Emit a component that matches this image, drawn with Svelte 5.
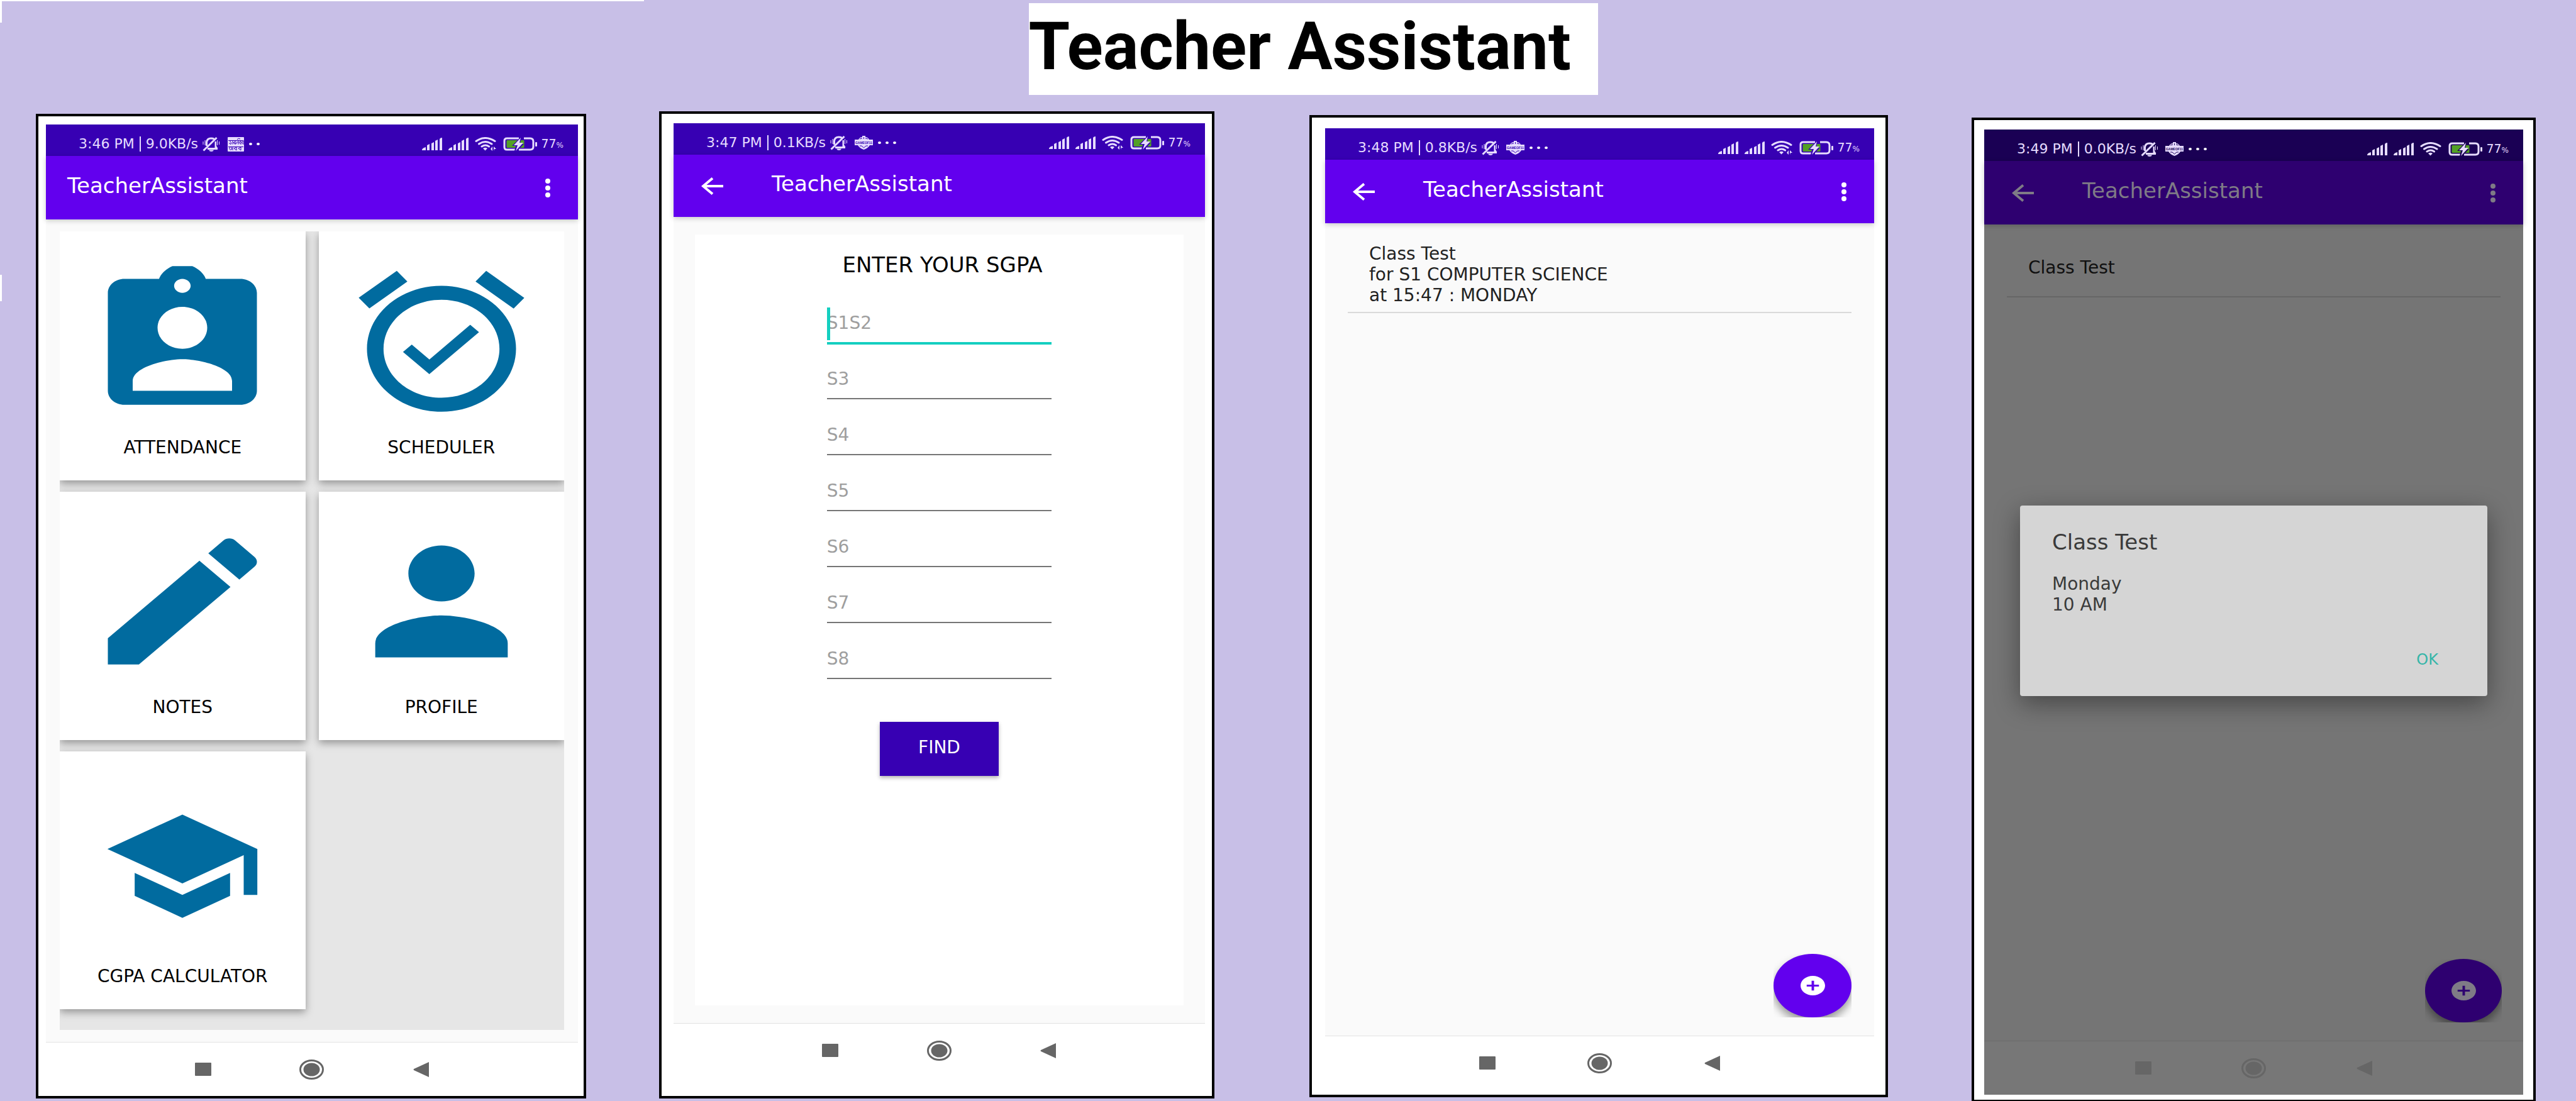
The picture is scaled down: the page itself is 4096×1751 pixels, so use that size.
<script>
  const tiles = [
    { label: 'ATTENDANCE', icon: 'M19 3h-4.18C14.6 2.300 14 1.600 13.200 1.200h-2.400C10 1.600 9.400 2.300 9.180 3H5c-1.1 0-2 .9-2 2v14c0 1.1.9 2 2 2h14c1.1 0 2-.9 2-2V5c0-1.1-.9-2-2-2zm-7 0c.55 0 1 .45 1 1s-.45 1-1 1-1-.45-1-1 .45-1 1-1zm0 4c1.66 0 3 1.34 3 3s-1.34 3-3 3-3-1.34-3-3 1.34-3 3-3zm6 12H6v-1.4c0-2 4-3.1 6-3.1s6 1.1 6 3.1V19z' },
    { label: 'SCHEDULER', icon: 'M22 5.72l-4.6-3.86-1.29 1.53 4.6 3.86L22 5.72zM7.88 3.39L6.6 1.86 2 5.71l1.29 1.53 4.59-3.85zM12 4c-4.97 0-9 4.03-9 9s4.02 9 9 9c4.97 0 9-4.03 9-9s-4.03-9-9-9zm0 16c-3.87 0-7-3.13-7-7s3.13-7 7-7 7 3.13 7 7-3.13 7-7 7zm-1.46-5.47L8.41 12.4l-1.06 1.06 3.18 3.18 6-6-1.06-1.06-4.93 4.95z' },
    { label: 'NOTES', icon: 'M3 17.25V21h3.75L17.81 9.94l-3.75-3.75L3 17.25zM20.71 7.04c.39-.39.39-1.02 0-1.41l-2.34-2.34c-.39-.39-1.02-.39-1.41 0l-1.83 1.83 3.75 3.75 1.83-1.83z' },
    { label: 'PROFILE', icon: 'M12 12c2.21 0 4-1.79 4-4s-1.79-4-4-4-4 1.79-4 4 1.79 4 4 4zm0 2c-2.67 0-8 1.34-8 4v2h16v-2c0-2.66-5.33-4-8-4z' },
    { label: 'CGPA CALCULATOR', small: true, icon: 'M5 13.18v4L12 21l7-3.82v-4L12 17l-7-3.82zM12 3L1 9l11 6 9-4.91V17h2V9L12 3z' }
  ];
  const semesters = ['S1S2', 'S3', 'S4', 'S5', 'S6', 'S7', 'S8'];
</script>

{#snippet signal()}
  <svg class="signal" viewBox="0 0 32 20">
    <path d="M0 20v-1q1-3 6-4v5zM8 20v-8l4-2v10zM15 20V9l4-2v13zM21 20V5l4-2v17zM28 20V2q1-2 4-2v20z" />
  </svg>
{/snippet}

{#snippet statusBar(time, speed, news, arrows)}
  <div class="status">
    <span class="clock">{time}</span><i class="bar"></i><span>{speed}</span>
    <svg class="bell" viewBox="0 0 27 23">
      <path d="M1.500 21.500L22.500 1M6.500 14V8q1-6 7-6 3 0 5 1M8 18.500h16" class="line" />
      <path d="M1 7v5M4 5v8M23.500 5v8M26.500 7v5" class="thin" />
      <path d="M19.500 7h2.500v7l2.500 4h-5zM10 20.500h8q-1 2.500-4 2.500t-4-2.500z" />
    </svg>
    {#if news}
      <svg class="news" viewBox="0 0 26 23">
        <rect width="26" height="23" rx="1" />
        <path d="M1 5.500h24M4 5.500v2q3 1 1 4l-3-2M8 5.500v6M12 5.500v6M12 7l-3 2 3 2q4-1 3-4M17 5.500v6M15 4q2-3 5-1M21 5.500v6l-3-3 3-2M25 5.500v6l-3-3 3-2M1 15.500h24M3 16q-1 5 3 4 2-2-1-4M8 16v5M14 16v5l-4-3 4-2M21 16v5l-4-3 4-2" class="ink" />
      </svg>
    {:else}
      <svg class="badge" viewBox="0 0 29 22">
        <path d="M6 6q2-4 6-4V0h5v2q4 0 6 4h6v9h-5q-3 5-9.500 7Q8 20 5 15H0V6z" />
        <path d="M8 5q2-1 4-1M21 5q-2-1-4-1M14.500 2v3M8 16h3l3.500 3 3.500-3h3" class="ink" />
        <text x="14.500" y="13" text-anchor="middle">GAMEOF11</text>
      </svg>
    {/if}
    <span class="more"><i></i><i></i>{#if !news}<i></i>{/if}</span>
    <span class="grow"></span>
    {@render signal()}
    {@render signal()}
    <svg class="wifi" viewBox="0 0 34 23">
      <path d="M2 6.500Q16.500-3.500 32 6.500M6.500 11q10-7 20.500 0M11 15q6-4 11.500 0" class="arc" />
      <path d="M13 18q3.500-2.500 7 0l-3.500 3.500z" />
      {#if arrows}<path d="M28 15v7l-3-3zM30 22v-7l4 4h-3z" />{/if}
    </svg>
    <svg class="battery" viewBox="0 0 54 22">
      <rect x="5.500" y="5" width="28" height="12" rx="1" class="charge" />
      <path d="M25 2H6Q2 2 2 6v10q0 4 4 4h13M33 2h10q5 0 5 5v8q0 5-5 5H25" class="case" />
      <path d="M28 0L14 14h6l-2 8h4l11-11h-6l2-11z" class="gap" />
      <path d="M28 1L17 13h6l-3 9 12-13h-6z" />
      <rect x="51" y="8" width="3" height="7" rx="1" />
    </svg>
    <span class="level">77<small>%</small></span>
  </div>
{/snippet}

{#snippet appBar(back, menu)}
  <header class="appbar">
    {#if back}
      <button class="back" aria-label="Back">
        <svg viewBox="0 0 36 28"><path d="M35 14H3M18 1.500L3 14l15 12.500" /></svg>
      </button>
    {/if}
    <h2>TeacherAssistant</h2>
    {#if menu}
      <button class="menu" aria-label="More options"><i></i><i></i><i></i></button>
    {/if}
  </header>
{/snippet}

{#snippet navBar()}
  <nav class="nav">
    <button aria-label="Recent apps"><svg width="26" height="21"><rect width="26" height="21" rx="1" /></svg></button>
    <button aria-label="Home">
      <svg width="39" height="32">
        <ellipse cx="19.500" cy="16" rx="18" ry="14.500" class="ring" />
        <ellipse cx="19.500" cy="16" rx="13" ry="10.500" />
      </svg>
    </button>
    <button aria-label="Back"><svg width="25" height="24"><path d="M25 0v24L1 13q-1-1 0-2z" /></svg></button>
  </nav>
{/snippet}

{#snippet addButton()}
  <div class="fab">
    <button aria-label="Add">
      <svg viewBox="2 2 20 20" preserveAspectRatio="none"><path d="M12 2C6.480 2 2 6.480 2 12s4.480 10 10 10 10-4.480 10-10S17.520 2 12 2zm5 11h-4v4h-2v-4H7v-2h4V7h2v4h4v2z" /></svg>
    </button>
  </div>
{/snippet}

<main class="page">
  <i class="mark top"></i>
  <i class="mark corner"></i>
  <i class="mark side"></i>
  <h1>Teacher Assistant</h1>

  <div class="phones">
    <section class="phone home">
      <div class="screen">
        {@render statusBar('3:46 PM', '9.0KB/s', true, true)}
        {@render appBar(false, true)}
        <div class="content">
          <div class="tiles">
            {#each tiles as tile}
              <button class="tile">
                <span class="art">
                  <svg class:small={tile.small} viewBox="0 0 24 24" preserveAspectRatio="none"><path d={tile.icon} /></svg>
                </span>
                <span class="label">{tile.label}</span>
              </button>
            {/each}
          </div>
        </div>
        {@render navBar()}
      </div>
    </section>

    <section class="phone grades">
      <div class="screen">
        {@render statusBar('3:47 PM', '0.1KB/s', false, true)}
        {@render appBar(true, false)}
        <div class="content">
          <form class="sheet">
            <h3>ENTER YOUR SGPA</h3>
            {#each semesters as name, i}
              <div class="field" class:focused={i === 0}>
                <input type="text" placeholder={name} aria-label={name} />
              </div>
            {/each}
            <button type="button" class="find">FIND</button>
          </form>
        </div>
        {@render navBar()}
      </div>
    </section>

    <section class="phone schedule">
      <div class="screen">
        {@render statusBar('3:48 PM', '0.8KB/s', false, true)}
        {@render appBar(true, true)}
        <div class="content">
          <ul>
            <li><span>Class Test<br />for S1 COMPUTER SCIENCE<br />at 15:47 : MONDAY</span></li>
          </ul>
          {@render addButton()}
        </div>
        {@render navBar()}
      </div>
    </section>

    <section class="phone alert">
      <div class="screen">
        {@render statusBar('3:49 PM', '0.0KB/s', false, false)}
        {@render appBar(true, true)}
        <div class="content">
          <ul>
            <li><span>Class Test</span></li>
          </ul>
          {@render addButton()}
        </div>
        {@render navBar()}
        <div class="overlay">
          <div class="dialog" role="dialog" aria-label="Class Test">
            <h3>Class Test</h3>
            <p>Monday<br />10 AM</p>
            <button>OK</button>
          </div>
        </div>
      </div>
    </section>
  </div>
</main>

<style>
  :global(body) { background: #c8bfe7; }
  .page {
    position: relative;
    box-sizing: border-box;
    display: flex;
    flex-direction: column;
    min-height: 100vh;
    padding-top: 5px;
    font-family: "DejaVu Sans", sans-serif;
    font-size: 28px;
    line-height: 33px;
    overflow: hidden;
  }
  h1, h2, h3, p, ul { margin: 0; padding: 0; font-weight: 400; }
  button { padding: 0; border: 0; background: none; font: inherit; color: inherit; }
  svg { display: block; fill: currentColor; flex: none; }

  .mark { position: absolute; background: #fff; }
  .mark.top { top: 0; left: 0; width: 25%; height: 2px; }
  .mark.corner { top: 2px; left: 0; width: 3px; height: 34px; }
  .mark.side { top: 437px; left: 0; width: 3px; height: 42px; }

  h1 {
    box-sizing: border-box;
    width: 22.1%;
    height: 146px;
    margin-left: 39.93%;
    background: #fff;
    color: #000;
    font: 700 106px/138px Roboto, sans-serif;
    white-space: nowrap;
  }

  .phones {
    flex: 1;
    display: grid;
    grid-template-columns: 57fr 875fr 116fr 883fr 151fr 920fr 133fr 897fr 64fr;
    margin-top: 26px;
    margin-bottom: -2px;
  }
  .phone {
    box-sizing: border-box;
    display: flex;
    border: 4px solid #000;
    background: #fff;
    min-width: 0;
    --status: #3700b3;
    --bar: #6200ee;
    --on-bar: #fff;
    --surface: #fafafa;
    --nav: #fff;
    --nav-line: #e2e2e2;
    --nav-icon: #666;
    --line: #dadada;
    --text: #222;
  }
  .home { grid-column: 2; margin: 4px 0 6px; padding: 13px 9px 0 12px; }
  .grades { grid-column: 4; margin: 0 0 6px; padding: 15px 11px 30px 19px; }
  .schedule { grid-column: 6; margin: 6px 0 8px; padding: 17px 18px 8px 21px; }
  .alert {
    grid-column: 8;
    margin: 10px 0 0;
    padding: 15px 16px 8px;
    --status: #1a0054;
    --bar: #2e0070;
    --on-bar: #7f7b86;
    --surface: #757575;
    --nav: #777;
    --nav-line: #6a6a6a;
    --nav-icon: #666;
    --line: #666;
    --text: #101010;
  }
  .screen { position: relative; flex: 1; display: flex; flex-direction: column; min-width: 0; }

  .status {
    box-sizing: border-box;
    display: flex;
    align-items: center;
    height: 50px;
    padding: 12px 23px 0 52px;
    background: var(--status);
    color: #e6dcff;
    font-size: 22px;
    line-height: 24px;
    white-space: nowrap;
  }
  .status .bar { width: 2px; height: 24px; margin: 0 8px; background: currentColor; }
  .bell { width: 27px; height: 23px; margin-left: 7px; }
  .bell .line { fill: none; stroke: currentColor; stroke-width: 3; }
  .bell .thin { fill: none; stroke: currentColor; stroke-width: 1; }
  .news { width: 26px; height: 23px; margin-left: 13px; }
  .badge { width: 29px; height: 22px; margin-left: 12px; }
  .badge text { font: 700 5px/6px "Liberation Sans", sans-serif; fill: var(--status); }
  .ink { fill: none; stroke: var(--status); stroke-width: 1; }
  .more { display: flex; gap: 7px; margin-left: 8px; }
  .more i { width: 5px; height: 4px; border-radius: 50%; background: #fff; }
  .grow { flex: 1; }
  .signal { width: 32px; height: 20px; margin-right: 10px; }
  .wifi { width: 34px; height: 23px; margin-right: 11px; }
  .wifi .arc { fill: none; stroke: currentColor; stroke-width: 3; stroke-linecap: round; }
  .battery { width: 54px; height: 22px; margin-right: 6px; }
  .battery .charge { fill: #53a025; }
  .battery .case { fill: none; stroke: currentColor; stroke-width: 3; }
  .battery .gap { fill: var(--status); }
  .level { font-size: 19px; }
  .level small { font-size: 12px; }

  .appbar {
    position: relative;
    z-index: 1;
    box-sizing: border-box;
    display: flex;
    align-items: center;
    height: 101px;
    padding: 0 44px 0 34px;
    background: var(--bar);
    color: var(--on-bar);
    box-shadow: 0 2px 8px rgba(0, 0, 0, 0.2);
  }
  .appbar h2 { flex: 1; padding-bottom: 8px; font-size: 34px; line-height: 40px; }
  .back { width: 36px; margin: 0 76px 0 10px; }
  .back path { fill: none; stroke: currentColor; stroke-width: 4; }
  .menu { display: grid; gap: 3px; }
  .menu i { width: 8px; height: 8px; border-radius: 50%; background: currentColor; }
  .grades .appbar { height: 99px; }

  .content { position: relative; flex: 1; display: flex; flex-direction: column; background: var(--surface); }

  .nav {
    box-sizing: border-box;
    display: flex;
    justify-content: center;
    height: 86px;
    border-top: 1px solid var(--nav-line);
    background: var(--nav);
    color: var(--nav-icon);
  }
  .nav button { display: flex; align-items: center; justify-content: center; width: 20.5%; }
  .nav .ring { fill: none; stroke: currentColor; stroke-width: 3; }

  .tiles {
    flex: 1;
    display: grid;
    grid-template-columns: 1fr 1fr;
    grid-template-rows: 396fr 396fr 410fr;
    gap: 18px 21px;
    margin: 19px 22px;
    padding-bottom: 33px;
    background: #e6e6e6;
    overflow: hidden;
  }
  .tile {
    display: flex;
    flex-direction: column;
    align-items: stretch;
    padding-bottom: 36px;
    background: #fff;
    color: #000;
    box-shadow: 0 5px 12px rgba(0, 0, 0, 0.35);
  }
  .art { flex: 1; display: flex; align-items: center; justify-content: center; padding-top: 24px; color: #016b9f; }
  .art svg { width: 316px; height: 267px; }
  .art svg.small { width: 260px; height: 219px; }

  .sheet {
    flex: 1;
    display: flex;
    flex-direction: column;
    align-items: center;
    margin: 28px 34px;
    padding-top: 29px;
    background: #fff;
  }
  .sheet h3 { margin-bottom: 17px; padding-left: 10px; color: #000; font-size: 34px; line-height: 38px; }
  .field { position: relative; width: 46%; margin-top: 24px; }
  .field input {
    box-sizing: border-box;
    display: block;
    width: 100%;
    height: 65px;
    padding: 16px 0 14px;
    border: 0;
    border-bottom: 2px solid #757575;
    border-radius: 0;
    background: none;
    outline: 0;
    font: 28px/33px "DejaVu Sans", sans-serif;
  }
  .field input::placeholder { color: #9e9e9e; opacity: 1; }
  .field.focused { margin-bottom: -2px; }
  .field.focused input { height: 67px; border-bottom: 4px solid #14cfc0; }
  .field.focused::before { content: ""; position: absolute; left: 0; top: 8px; width: 5px; height: 52px; background: #14cfc0; }
  .find {
    width: 189px;
    height: 86px;
    margin-top: 68px;
    padding-bottom: 6px;
    background: #3700b3;
    color: #fff;
    box-shadow: 0 3px 6px rgba(0, 0, 0, 0.3);
  }

  ul { margin: 22px 36px 0; list-style: none; }
  li {
    box-sizing: border-box;
    display: flex;
    align-items: center;
    min-height: 94px;
    padding: 10px 34px;
    border-bottom: 2px solid var(--line);
    color: var(--text);
  }

  .fab { position: absolute; right: 36px; bottom: 29px; width: 124px; height: 101px; overflow: hidden; }
  .alert .fab { right: 34px; width: 122px; }
  .fab button {
    display: grid;
    place-items: center;
    width: 100%;
    height: 100%;
    border-radius: 50%;
    background: var(--bar);
    color: var(--on-bar);
    box-shadow: 0 8px 14px rgba(0, 0, 0, 0.4);
  }
  .fab svg { width: 39px; height: 31px; }

  .overlay {
    position: absolute;
    inset: 0;
    z-index: 2;
    display: flex;
    align-items: center;
    padding: 0 57px 36px;
  }
  .dialog {
    flex: 1;
    display: flex;
    flex-direction: column;
    padding: 39px 78px 43px 51px;
    border-radius: 4px;
    background: #d5d5d5;
    color: #3a3a3a;
    box-shadow: 0 12px 40px rgba(0, 0, 0, 0.4);
  }
  .dialog h3 { margin-bottom: 31px; font-size: 34px; line-height: 38px; }
  .dialog button { align-self: flex-end; margin-top: 56px; color: #35b5a8; font-size: 24px; line-height: 30px; }
</style>
